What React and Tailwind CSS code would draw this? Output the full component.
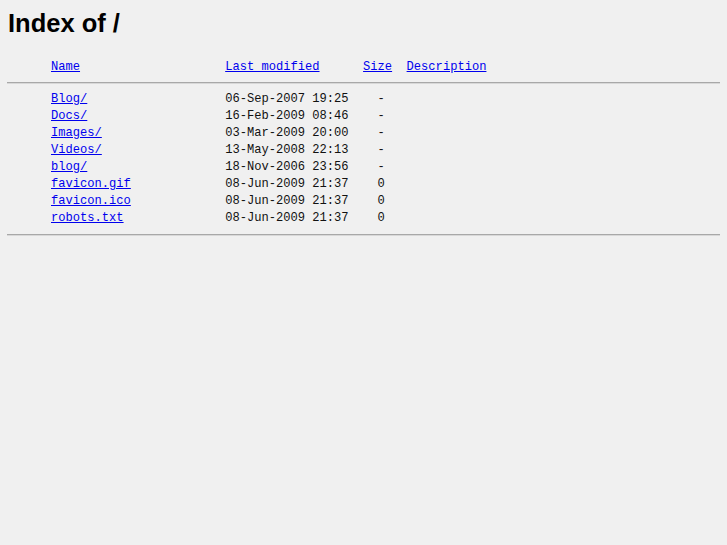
const entries = [
    { name: 'Blog/', modified: '06-Sep-2007 19:25', size: '-' },
    { name: 'Docs/', modified: '16-Feb-2009 08:46', size: '-' },
    { name: 'Images/', modified: '03-Mar-2009 20:00', size: '-' },
    { name: 'Videos/', modified: '13-May-2008 22:13', size: '-' },
    { name: 'blog/', modified: '18-Nov-2006 23:56', size: '-' },
    { name: 'favicon.gif', modified: '08-Jun-2009 21:37', size: '0' },
    { name: 'favicon.ico', modified: '08-Jun-2009 21:37', size: '0' },
    { name: 'robots.txt', modified: '08-Jun-2009 21:37', size: '0' },
];

const linkClass = 'text-[#0000ee] underline';

function Rule({ className }) {
    return <div className={`h-[2px] border-t border-t-[#a8a8a8] border-b border-b-[#d8d8d8] ${className}`} />;
}

export default function App() {
    return (
        <div className="min-h-[545px] bg-[#f0f0f0] px-[7px] text-[#111]">
            <h1 className="pt-[8px] pl-px font-['Liberation_Sans',Arial,sans-serif] text-[25.5px] font-bold leading-[30px] text-black">
                Index of /
            </h1>

            <div className="font-['Courier','Liberation_Mono','Courier_New',monospace] text-[12.1px] leading-[17px] whitespace-pre">
                <div className="mt-[21px] flex pl-[44px]">
                    <span className="w-[24ch]"><a href="#" className={linkClass}>Name</a></span>
                    <span className="w-[19ch]"><a href="#" className={linkClass}>Last modified</a></span>
                    <span className="w-[6ch]"><a href="#" className={linkClass}>Size</a></span>
                    <span><a href="#" className={linkClass}>Description</a></span>
                </div>

                <Rule className="mt-[6px]" />

                <div className="mt-[7px]">
                    {entries.map((entry) => (
                        <div key={entry.name} className="flex pl-[44px]">
                            <span className="w-[24ch]"><a href="#" className={linkClass}>{entry.name}</a></span>
                            <span className="w-[17ch]">{entry.modified}</span>
                            <span className="w-[5ch] text-right">{entry.size}</span>
                        </div>
                    ))}
                </div>

                <Rule className="mt-[7px]" />
            </div>
        </div>
    );
}
